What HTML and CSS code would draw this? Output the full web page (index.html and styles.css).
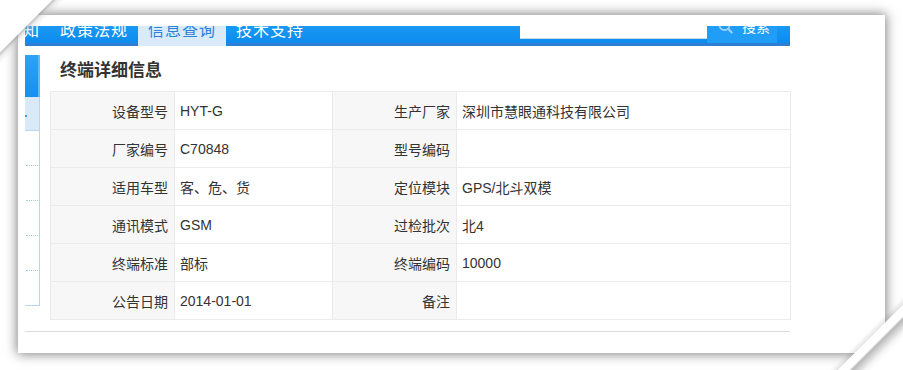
FILE: index.html
```html
<!DOCTYPE html>
<html lang="zh-CN">
<head>
<meta charset="utf-8">
<title>终端详细信息</title>
<link rel="stylesheet" href="styles.css">
</head>
<body>
<div class="stage">
  <div class="paper">
    <div class="shot">
      <div class="nav">
        <div class="tabs">
          <span class="tab">最新通知</span>
          <span class="tab">政策法规</span>
          <span class="tab active">信息查询</span>
          <span class="tab">技术支持</span>
        </div>
        <div class="search">
          <span class="search-input"></span>
          <span class="search-btn">
            <svg class="search-icon" width="15" height="18" viewBox="0 0 15 18"><circle cx="6.5" cy="6" r="5" fill="none" stroke="#9fd3fa" stroke-width="1.8"/><line x1="10.2" y1="9.8" x2="13.6" y2="13.4" stroke="#9fd3fa" stroke-width="2.2" stroke-linecap="round"/></svg>
            <span class="search-text">搜索</span>
          </span>
        </div>
      </div>
      <div class="body">
        <div class="side">
          <div class="side-head"></div>
          <div class="side-item current"><span class="dot"></span></div>
          <div class="side-item"></div>
          <div class="side-item"></div>
          <div class="side-item"></div>
          <div class="side-item"></div>
          <div class="side-item last"></div>
        </div>
        <div class="main">
          <h2 class="title">终端详细信息</h2>
          <table class="detail">
            <colgroup>
              <col class="c-label"><col class="c-value"><col class="c-label"><col class="c-value-wide">
            </colgroup>
            <tr><td class="label">设备型号</td><td class="value">HYT-G</td><td class="label">生产厂家</td><td class="value">深圳市慧眼通科技有限公司</td></tr>
            <tr><td class="label">厂家编号</td><td class="value">C70848</td><td class="label">型号编码</td><td class="value"></td></tr>
            <tr><td class="label">适用车型</td><td class="value">客、危、货</td><td class="label">定位模块</td><td class="value">GPS/北斗双模</td></tr>
            <tr><td class="label">通讯模式</td><td class="value">GSM</td><td class="label">过检批次</td><td class="value">北4</td></tr>
            <tr><td class="label">终端标准</td><td class="value">部标</td><td class="label">终端编码</td><td class="value">10000</td></tr>
            <tr><td class="label">公告日期</td><td class="value">2014-01-01</td><td class="label">备注</td><td class="value"></td></tr>
          </table>
        </div>
      </div>
      <div class="rule"></div>
    </div>
  </div>
  <div class="curl-tl"></div>
  <div class="curl-br"></div>
</div>
</body>
</html>
```
FILE: styles.css
```css
* { box-sizing: border-box; }
html, body { margin: 0; padding: 0; background: #fff; }
body { font-family: "Liberation Sans", "Noto Sans CJK SC", sans-serif; color: #333; }

.stage {
  position: relative;
  width: 903px;
  height: 370px;
  overflow: hidden;
  padding: 15px 18px;
  background: #fff;
}

.paper {
  width: 867px;
  height: 338px;
  padding: 11px 0 0 7px;
  background: #fff;
  box-shadow: 0 0 11px 1px rgba(0, 0, 0, 0.5);
}

.shot {
  width: 860px;
  height: 327px;
  overflow: hidden;
}

/* nav */
.nav {
  width: 765px;
  height: 30px;
  margin-top: -10px;
  display: flex;
  overflow: hidden;
  background: linear-gradient(#20a0f7, #0d8bee 27px, #2c7fd2 27px, #2c7fd2 30px);
  font-family: "Noto Sans CJK SC", sans-serif;
}
.tabs {
  display: flex;
  margin-left: -63px;
}
.tab {
  width: 88px;
  height: 30px;
  line-height: 26px;
  text-align: center;
  color: #fff;
  font-size: 16px;
  letter-spacing: 1px;
  white-space: nowrap;
}
.tab.active {
  background: #d9eafb;
  color: #2b83d8;
}
.search {
  display: flex;
  margin-left: auto;
  margin-right: 13px;
  align-items: flex-start;
}
.search-input {
  width: 187px;
  height: 23px;
  background: #fff;
  border-bottom: 1px solid #c9dcec;
}
.search-btn {
  width: 70px;
  height: 27px;
  display: flex;
  align-items: flex-start;
  padding-left: 11px;
  gap: 9px;
  background: #1f9df7;
  color: #fff;
}
.search-icon {
  display: block;
  margin-top: 3px;
}
.search-text {
  font-size: 14px;
  line-height: 23px;
  margin-top: -1px;
}

/* body */
.body {
  display: flex;
  margin-top: 9px;
}
.side {
  width: 15px;
  flex: none;
}
.side-head {
  height: 42px;
  background: linear-gradient(#2aa3f8, #1590ef);
  border-right: 2px solid #63b8f6;
}
.side-item {
  height: 35px;
  border-right: 1px solid #b6d6ee;
  border-bottom: 1px dotted #9ccdee;
  margin-left: 1px;
}
.side-item.current {
  height: 34px;
  margin-left: 0;
  background: #dae9f8;
  border-bottom: 1px solid #bcd8ef;
  padding-top: 18px;
}
.side-item.last {
  margin-left: 0;
  border-bottom: 1px solid #b6d6ee;
}
.dot {
  display: block;
  width: 2px;
  height: 2px;
  background: #4a98e2;
}

.main {
  flex: 1;
  padding-left: 10px;
}
.title {
  margin: 0 0 8px;
  padding-left: 10px;
  height: 28px;
  line-height: 28px;
  font-size: 17px;
  font-weight: bold;
  color: #333;
  font-family: "Noto Sans CJK SC", sans-serif;
}

.detail {
  width: 740px;
  border-collapse: collapse;
  table-layout: fixed;
  border: 1px solid #c8c8c8;
}
.c-label { width: 124px; }
.c-value { width: 158px; }
.c-value-wide { width: 334px; }
.detail td {
  height: 38px;
  padding: 0;
  border: 1px solid #ebebeb;
  font-size: 14px;
  color: #333;
  white-space: nowrap;
}
.detail td.label {
  text-align: right;
  padding-right: 6px;
  background: #f7f7f7;
}
.detail td.value {
  padding-left: 5px;
  background: #fff;
}

.rule {
  width: 765px;
  margin-top: 11px;
  border-top: 1px solid #dcdcdc;
}

/* page curl decoration over the paper corners */
.curl-tl {
  position: absolute;
  left: 0;
  top: 0;
  width: 70px;
  height: 70px;
  background: linear-gradient(135deg, #fff 0, #fff 37%, rgba(150, 150, 150, 0.55) 38%, rgba(200, 200, 200, 0.3) 41%, rgba(255, 255, 255, 0) 46%);
}
.curl-br {
  position: absolute;
  left: 823px;
  top: 290px;
  width: 80px;
  height: 80px;
  background: linear-gradient(135deg, rgba(255, 255, 255, 0) 0, rgba(255, 255, 255, 0) 54%, rgba(0, 0, 0, 0.1) 59%, #fff 59.5%, #fff 66%, #b9b9b9 68%, #f4f4f4 76%, #fff 80%, #fff 100%);
}
```
